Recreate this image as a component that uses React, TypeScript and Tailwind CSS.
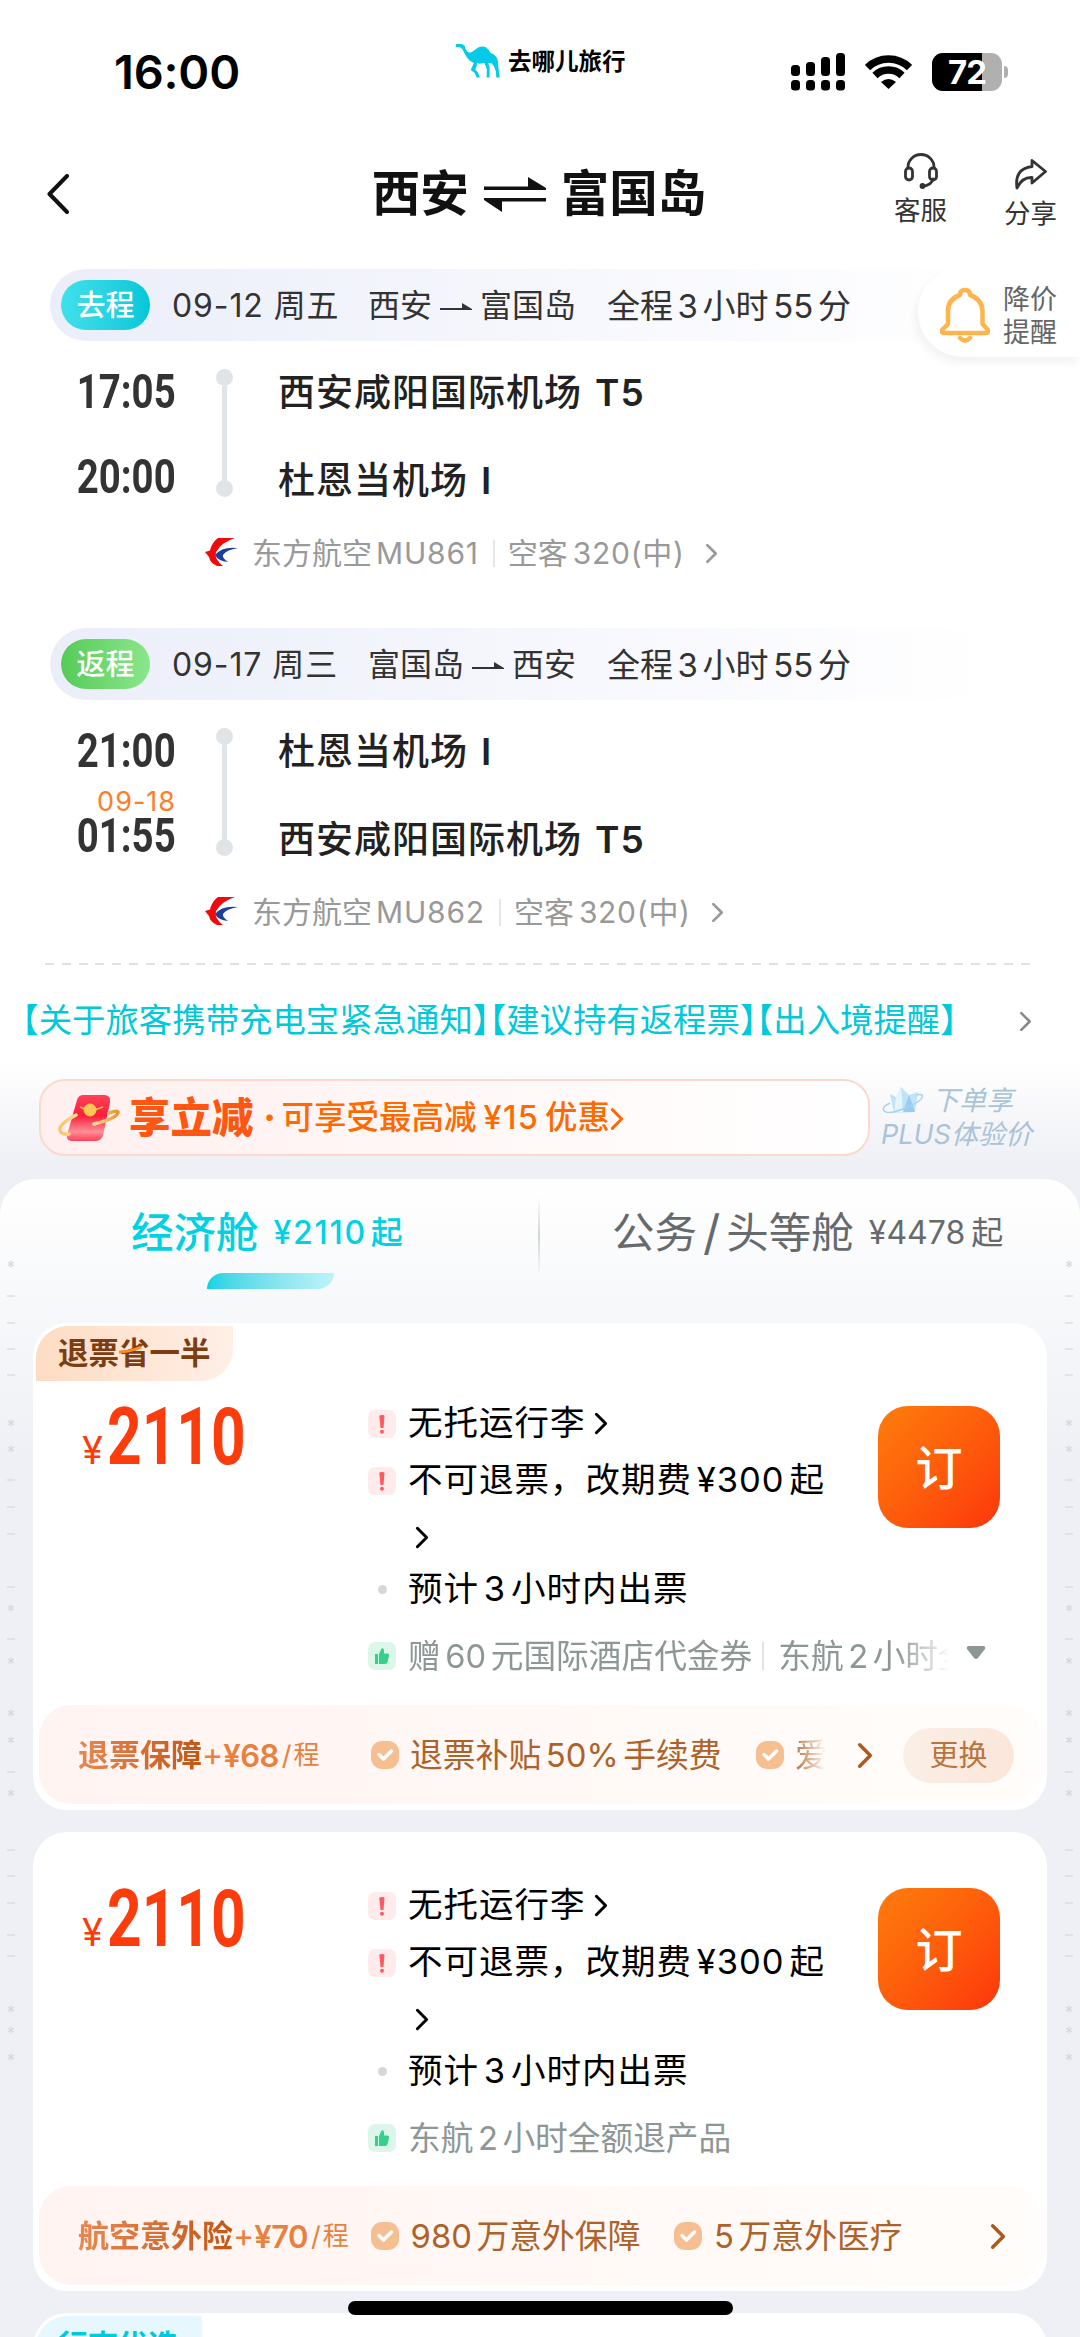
import { Fragment, type ReactNode } from 'react';

interface Airport {
  name: string;
  terminal: string;
}

interface Leg {
  tag: string;
  tagClass: string;
  date: string;
  from: string;
  to: string;
  depart: string;
  arrive: string;
  nextDay?: string;
  airports: Airport[];
  flight: string;
}

const xian = { name: '西安咸阳国际机场', terminal: 'T5' };
const phuQuoc = { name: '杜恩当机场', terminal: 'I' };

const legs: Leg[] = [
  {
    tag: '去程',
    tagClass: 'from-[#3fe0ea] to-[#00c7d9]',
    date: '09-12 周五',
    from: '西安',
    to: '富国岛',
    depart: '17:05',
    arrive: '20:00',
    airports: [xian, phuQuoc],
    flight: 'MU861'
  },
  {
    tag: '返程',
    tagClass: 'from-[#55cb58] to-[#8ae68a]',
    date: '09-17 周三',
    from: '富国岛',
    to: '西安',
    depart: '21:00',
    arrive: '01:55',
    nextDay: '09-18',
    airports: [phuQuoc, xian],
    flight: 'MU862'
  }
];

// Vertical positions of the tiny marks down both edges of the list
const marks: [number, string][] = [
  [85, '*'], [117, '-'], [144, '-'], [170, '-'], [196, '-'], [244, '*'], [270, '*'],
  [301, '-'], [328, '-'], [355, '-'], [408, '-'], [429, '*'], [460, '-'], [482, '*'],
  [534, '*'], [561, '*'], [593, '-'], [614, '*'], [671, '-'], [697, '-'], [724, '-'],
  [756, '-'], [777, '-'], [830, '*'], [851, '*'], [878, '*']
];

/* Adds a little air round digit runs inside Chinese text */
function Mixed({ text }: { text: string }) {
  return (
    <>
      {text.split(/([¥0-9%]+)/).map((part, i) =>
        i % 2 ? (
          <span key={i} className="mx-[0.14em]">{part}</span>
        ) : (
          <Fragment key={i}>{part}</Fragment>
        )
      )}
    </>
  );
}

function Chevron({ className = '', width = 3 }: { className?: string; width?: number }) {
  return (
    <svg viewBox="0 0 12 20" className={`shrink-0 ${className}`} fill="none" stroke="currentColor" strokeWidth={width} strokeLinecap="round" strokeLinejoin="round">
      <path d="M2 2 L10 10 L2 18" />
    </svg>
  );
}

function StatusBar() {
  return (
    <div className="relative flex h-36 items-center justify-between pl-[114px] pr-[72px]">
      <span className="pb-[2px] text-[47px] font-semibold leading-none tracking-[-0.2px] text-black">16:00</span>

      {/* App brand */}
      <div className="absolute left-[455px] top-[43px] flex items-center gap-2">
        <svg viewBox="0 0 134 104" className="h-9 w-[45px]" fill="#06cbe8">
          <path d="M2 2 L13 1 L24 3 L29 7 L31 15 L36 24 Q42 29 50 25 Q60 19 69 12 Q80 6 92 11 Q101 18 106 28 Q118 31 125 43 Q129 52 129 68 L133 101 H123 L122 84 L116 68 L108 58 L99 59 L103 70 L103 101 H94 L95 78 L88 58 L73 60 L66 58 L64 70 L60 78 L68 85 L74 101 H64 L59 88 L47 79 L50 71 L56 58 L44 51 Q34 42 28 29 L22 16 L15 11 L3 10 Z" />
        </svg>
        <span className="pt-px text-[23.5px] font-bold leading-none text-black">去哪儿旅行</span>
      </div>

      <div className="flex items-center">
        <svg viewBox="0 0 54 38" className="mr-5 h-[38px] w-[54px]" fill="#000">
          <rect x="0" y="12" width="9" height="11" rx="3.5" />
          <rect x="15" y="9" width="9" height="14" rx="3.5" />
          <rect x="30" y="4" width="9" height="19" rx="3.5" />
          <rect x="45" y="0" width="9" height="23" rx="3.5" />
          <rect x="0" y="27" width="9" height="10.5" rx="3.5" />
          <rect x="15" y="27" width="9" height="10.5" rx="3.5" />
          <rect x="30" y="27" width="9" height="10.5" rx="3.5" />
          <rect x="45" y="27" width="9" height="10.5" rx="3.5" />
        </svg>
        <svg viewBox="0 0 47 34" className="mr-5 h-[34px] w-[47px]" fill="none" stroke="#000" strokeWidth="7.5">
          <path d="M2.5 12.5 A30 30 0 0 1 44.500 12.500" />
          <path d="M10 20.500 A19.500 19.500 0 0 1 37 20.500" />
          <path d="M23.500 34 L16 27 Q23.500 21 31 27 Z" fill="#000" stroke="none" />
        </svg>
        <div className="relative flex h-[38px] w-[70px] items-center overflow-hidden rounded-[11px] bg-[#b0b0b0]">
          <div className="absolute inset-y-0 left-0 w-[50px] bg-black" />
          <span className="relative w-full text-center text-[33px] font-bold leading-none tracking-[-1px] text-white">72</span>
        </div>
        <div className="ml-0.5 h-3 w-1 rounded-r-full bg-[#b0b0b0]" />
      </div>
    </div>
  );
}

function NavBar() {
  return (
    <div className="relative flex h-[100px] items-center justify-center">
      <svg viewBox="0 0 22 40" className="absolute left-[47px] top-[30px] h-10 w-[22px]" fill="none" stroke="#111" strokeWidth="4" strokeLinecap="round" strokeLinejoin="round">
        <path d="M20 2 L2.500 20 L20 38" />
      </svg>
      <h1 className="flex -translate-x-px items-center text-[48.500px] font-bold leading-none text-[#111]">
        西安
        <svg viewBox="0 0 64 40" className="mx-[14px] h-10 w-16" fill="#111">
          <path d="M1 12.500 H45 V3 L63 14 V16 H1 Z" />
          <path d="M63 27.500 H19 V38 L1 26 V24 H63 Z" />
        </svg>
        富国岛
      </h1>
      <div className="absolute left-[894px] top-[9px] flex flex-col items-center text-[26.500px] leading-none text-[#333]">
        <svg viewBox="0 0 36 36" className="mb-2 h-9 w-9" fill="none" stroke="#333" strokeWidth="2.800">
          <path d="M5 16 V14 A13 12.500 0 0 1 31 14 V16" />
          <rect x="2.500" y="15" width="7" height="12" rx="3.500" />
          <rect x="26.500" y="15" width="7" height="12" rx="3.500" />
          <path d="M30 26 Q29 32 19 33.500" strokeLinecap="round" />
          <circle cx="19.500" cy="33" r="1.500" fill="#333" />
        </svg>
        客服
      </div>
      <div className="absolute left-[1004px] top-[14px] flex flex-col items-center text-[26.500px] leading-none text-[#333]">
        <svg viewBox="0 0 34 32" className="mb-[10px] h-8 w-[34px]" fill="none" stroke="#333" strokeWidth="2.800" strokeLinejoin="round">
          <path d="M18 2.500 L31.500 13.500 L18 25 V19.500 Q8 19 3 30 Q0 11 18 8.500 Z" />
        </svg>
        分享
      </div>
    </div>
  );
}

function LegBlock({ leg }: { leg: Leg }) {
  return (
    <section className="mb-[56px]">
      <div className="ml-[50px] mr-[80px] flex h-[72px] items-center rounded-l-full bg-gradient-to-r from-[#ebeef9] via-[#f6f7fd] to-white pl-[11px] text-[33px] leading-none text-[#333]">
        <span className={`flex h-[50px] w-[89px] items-center justify-center rounded-full bg-gradient-to-r text-[29px] font-medium text-white ${leg.tagClass}`}>
          {leg.tag}
        </span>
        <span className="ml-[22px] w-[196px] whitespace-nowrap pt-[2px] text-[32px] tracking-[0.9px]">{leg.date}</span>
        <span className="flex w-[239px] items-center pt-[2px] text-[32px]">
          {leg.from}
          <svg viewBox="0 0 32 10" className="mx-[8px] h-[10px] w-[32px]" fill="#333">
            <path d="M0 7 H22 V2 L32 8 V9 H0 Z" />
          </svg>
          {leg.to}
        </span>
        <span className="whitespace-nowrap pt-[2px]"><Mixed text="全程3小时55分" /></span>
      </div>

      <div className="mt-7 flex h-[134px]">
        <div className="flex w-[176px] flex-col items-end text-[48px] font-bold leading-none text-[#333]">
          <span className="flex h-[46px] origin-right scale-x-[0.8] items-center font-[Roboto]">{leg.depart}</span>
          <span className="mb-[2px] flex h-[37px] items-end text-[27px] font-normal leading-[19px] tracking-[1px] text-[#ff7d28]">{leg.nextDay}</span>
          <span className="flex h-[46px] origin-right scale-x-[0.8] items-center font-[Roboto]">{leg.arrive}</span>
        </div>
        <div className="ml-10 flex h-32 w-[17px] flex-col items-center">
          <i className="size-[17px] rounded-full bg-[#e0e4e6]" />
          <i className="w-[5px] flex-1 bg-[#e0e4e6]" />
          <i className="size-[17px] rounded-full bg-[#e0e4e6]" />
        </div>
        <div className="ml-[45px] flex flex-col gap-[42px] text-[37px] font-medium leading-none tracking-[1px] text-[#222]">
          {leg.airports.map(({ name, terminal }) => (
            <div key={name} className="flex h-[46px] items-center">
              {name}
              <span className="ml-[13px] font-semibold">{terminal}</span>
            </div>
          ))}
        </div>
      </div>

      <div className="mt-[29px] flex h-10 items-center pl-[205px] pt-[2px] text-[30px] leading-none text-[#999]">
        <svg viewBox="0 0 33 29" className="-mt-[2px] mr-[14px] h-[29px] w-[33px]">
          <path d="M13 0 H30 Q17 4 11 14 Q9 21 18 28 L12 28 Q5 25 4 19 L0 14 L5 12.500 Q7 4 13 0 Z" fill="#f00a0a" />
          <path d="M33 10 Q17 8 10 17 Q13 23 23 24 Q17 20 18 17 Q21 12 33 10 Z" fill="#1b3f9c" />
        </svg>
        东方航空
        <span className="ml-1 tracking-[0.8px]">{leg.flight}</span>
        <i className="ml-[14px] mr-[13px] h-[27px] w-[2px] bg-[#e6e6e6]" />
        空客
        <span className="ml-[5px] tracking-[0.7px]">320(中)</span>
        <Chevron className="ml-[20px] h-[21px] w-[13px]" width={2.6} />
      </div>
    </section>
  );
}

function PriceAlert() {
  return (
    <div className="absolute right-0 top-[267px] flex h-[90px] w-[162px] items-center rounded-l-full bg-white pl-[22px] pt-[5px] shadow-[-3px_6px_8px_rgba(0,0,0,0.05)]">
      <svg viewBox="0 0 50 56" className="h-14 w-[50px]" fill="none" stroke="#ffb44e" strokeWidth="4.500" strokeLinejoin="round" strokeLinecap="round">
        <path d="M20 8 Q20 3 25 3 Q30 3 30 8 Q42 12 42.500 24 V37 L48 43 Q49 46 46 46 H4 Q1 46 2 43 L8 37 V24 Q8 12 20 8 Z" />
        <path d="M20 51 Q25 56 30 51" />
      </svg>
      <div className="ml-[13px] pt-[3px] text-[27px] leading-[33px] text-[#666]">
        降价
        <br />
        提醒
      </div>
    </div>
  );
}

function PromoRow() {
  return (
    <div className="mt-9 flex h-[77px] items-center pl-[39px]">
      <div className="flex h-full w-[831px] items-center rounded-[26px] border-2 border-[#fdd8cb] bg-gradient-to-r from-[#fff0ef] to-white pl-[17px] text-[32.500px] font-medium leading-none text-[#ff6a00]">
        <svg viewBox="0 0 62 50" className="h-[50px] w-[62px]">
          <defs>
            <linearGradient id="packet" x1="0" y1="0" x2="0" y2="1">
              <stop offset="0" stopColor="#ff4257" />
              <stop offset="0.45" stopColor="#f81e3c" />
              <stop offset="0.8" stopColor="#ff8f95" />
              <stop offset="1" stopColor="#ff4058" />
            </linearGradient>
            <linearGradient id="ring" x1="0" y1="0" x2="1" y2="0">
              <stop offset="0" stopColor="#f8c468" />
              <stop offset="0.5" stopColor="#ffe9b0" />
              <stop offset="1" stopColor="#e8952e" />
            </linearGradient>
          </defs>
          <path d="M24 2 H47 Q53 3 52 9 L45 43 Q43 48 37 48 H13 Q8 47 9 42 L19 7 Q20 3 24 2 Z" fill="url(#packet)" />
          <path d="M18 22 Q1 31 2 37 Q3 42 11 41 M36 31 Q60 25 60 19 Q59 17 51 20" fill="none" stroke="url(#ring)" strokeWidth="3.500" strokeLinecap="round" />
          <path d="M22 14 Q32 20 45 14" fill="none" stroke="#ffb15c" strokeWidth="1.500" />
          <circle cx="32" cy="17" r="6.500" fill="#ffc654" />
        </svg>
        <div className="flex items-center pt-[2px]">
          <span className="ml-[9px] text-[41.500px] font-black text-[#ff5612]">享立减</span>
          <span className="mx-[10px] w-2 text-center font-black">·</span>
          可享受最高减
          <span className="ml-[7px] mr-[6px] tracking-[1.300px]">¥15</span>
          优惠
          <Chevron className="h-[26px] w-[14px]" width={2.600} />
        </div>
      </div>
      <div className="ml-[11px] text-[27px] italic leading-[34px] text-[#a9c3d8]">
        <div className="flex items-center">
          <svg viewBox="0 0 44 30" className="mr-[7px] h-[30px] w-11">
            <path d="M9 8 L15 11 L20 1 L28 9 L37 6 L34 26 L13 27 Z" fill="#bfe3f8" />
            <path d="M20 1 L22 26 L13 27 L15 11 Z" fill="#e2f4fd" />
            <path d="M28 9 L22 26 L34 26 Z" fill="#98cdf0" />
            <path d="M9 17 Q0 21 3 25 Q8 29 24 22 Q44 14 41 9 Q39 8 36 9" fill="none" stroke="#a8d2ee" strokeWidth="1.500" />
          </svg>
          下单享
        </div>
        <div className="whitespace-nowrap">PLUS体验价</div>
      </div>
    </div>
  );
}

function BulletRow({ kind, className = '', children }: { kind: 'warn' | 'dot' | 'gift'; className?: string; children: ReactNode }) {
  return (
    <div className={`flex items-center ${className}`}>
      <span className="mr-[12px] flex w-7 shrink-0 justify-center">
        {kind === 'warn' && (
          <svg viewBox="0 0 28 28" className="size-7">
            <rect width="28" height="28" rx="7" fill="#ffebec" />
            <path d="M11.300 6 Q11.300 5 14 5 Q16.500 5 16.500 6 L15.500 18 H12.500 Z" fill="#fb5b62" />
            <circle cx="14" cy="21.700" r="2" fill="#fb5b62" />
          </svg>
        )}
        {kind === 'dot' && <i className="size-[9px] rounded-full bg-[#d5d8d8]" />}
        {kind === 'gift' && (
          <svg viewBox="0 0 28 28" className="size-7">
            <rect width="28" height="28" rx="7" fill="#dcf7ea" />
            <path d="M7 12 H10 V22 H7 Z M11 12 L13.500 6.500 Q15.500 5.500 16 8 V11.500 H20 Q21.500 12 21 14 L19.500 20 Q19 22 17 22 H11 Z" fill="#36cf8b" />
          </svg>
        )}
      </span>
      {children}
    </div>
  );
}

function Check() {
  return (
    <svg viewBox="0 0 28 28" className="size-7 shrink-0">
      <rect width="28" height="28" rx="11" fill="#f6bf92" />
      <path d="M8 13.500 L12.500 18 L20.500 10" fill="none" stroke="#fff" strokeWidth="3.500" strokeLinecap="round" strokeLinejoin="round" />
    </svg>
  );
}

function FareCard({ badge, gifts, insurance }: { badge?: boolean; gifts: ReactNode; insurance: ReactNode }) {
  return (
    <article className={`flex flex-col rounded-[34px] bg-white ${badge ? 'h-[487px]' : 'h-[459px]'}`}>
      {badge && (
        <div className="ml-[3px] mt-[3px] flex h-[55px] w-[197px] items-center rounded-br-[32px] rounded-tl-[32px] bg-gradient-to-r from-[#fedcc3] to-[#ffefe6] pl-[22px] text-[30.500px] font-bold leading-none text-[#7a3d14]">
          退票
          <span className="relative">
            省
            <svg viewBox="0 0 24 9" className="absolute -left-px top-[7px] h-[9px] w-6">
              <path d="M1 7 Q12 7 23 2" fill="none" stroke="#ff8a1c" strokeWidth="3" />
            </svg>
          </span>
          一半
        </div>
      )}
      <div className={`flex ${badge ? 'pt-[17px]' : 'pt-[48px]'}`}>
        <div className="flex w-[335px] items-baseline pl-[49px] leading-none text-[#fc3c0c]">
          <span className="w-[25px] text-[38px]">¥</span>
          <span className="inline-block origin-left scale-x-[0.765] font-[Roboto] text-[79px] font-bold">2110</span>
        </div>
        <div className="-mt-[3px] w-[510px] text-[34.500px] leading-none tracking-[1px] text-black">
          <BulletRow kind="warn" className="h-[57px]">
            无托运行李
            <Chevron className="ml-[8px] h-[23px] w-[14px]" width={2.600} />
          </BulletRow>
          <BulletRow kind="warn" className="h-[57px]">
            <span className="whitespace-nowrap"><Mixed text="不可退票，改期费¥300起" /></span>
          </BulletRow>
          <div className="flex h-[56px] items-center pl-[47px]">
            <Chevron className="h-[23px] w-[14px]" width={2.600} />
          </div>
          <BulletRow kind="dot" className="h-[48px]">
            <span><Mixed text="预计3小时内出票" /></span>
          </BulletRow>
        </div>
        <button className="mt-2 h-[122px] w-[122px] rounded-[30px] bg-gradient-to-br from-[#fd7c0c] to-[#fd330b] text-[47px] font-medium leading-none text-white">
          订
        </button>
      </div>
      <BulletRow kind="gift" className="mt-[23px] h-[40px] pl-[335px] pr-[61px] text-[32.700px] leading-none text-[#8e9796]">
        {gifts}
      </BulletRow>
      <div className="mx-[6px] mb-[6px] mt-auto flex h-[99px] items-center rounded-[32px] bg-gradient-to-r from-[#fff4f1] to-[#fffdfb] pl-[40px] pt-px text-[32.800px] leading-none text-[#ae622a]">
        {insurance}
      </div>
    </article>
  );
}

function InsuranceName({ name, price }: { name: string; price: string }) {
  return (
    <div className="flex w-[292px] shrink-0 items-center whitespace-nowrap text-[#e8803f]">
      <span className="-ml-px bg-gradient-to-r from-[#ea8750] to-[#c25712] bg-clip-text text-[31px] font-bold leading-[40px] text-transparent">{name}</span>
      <span className="text-[32px]">+</span>
      <span className="text-[31px] font-semibold tracking-[-0.5px]">{price}</span>
      <span className="ml-[3px] text-[27px]">/</span>
      <span className="ml-[2px] text-[26px]">程</span>
    </div>
  );
}

function Marks({ side }: { side: string }) {
  return (
    <div className={`absolute top-0 w-2 ${side}`}>
      {marks.map(([y, kind]) => (
        <svg key={y} viewBox="0 0 8 8" className="absolute left-0 size-2" style={{ top: y - 4 }} stroke="#d6d7d9" strokeWidth="1.200">
          <path d={kind === '-' ? 'M0 4 H8' : 'M4 0.500 V7.500 M1 2 L7 6 M7 2 L1 6'} />
        </svg>
      ))}
    </div>
  );
}

export default function App() {
  return (
    <div className="relative h-[2337px] w-[1080px] overflow-hidden bg-[linear-gradient(#fff_0,#fff_1060px,#eff0f5_1165px)] font-['Inter','Noto_Sans_CJK_SC',sans-serif]">
      <StatusBar />
      <NavBar />
      <main className="pt-[25px]">
        {legs.map((leg) => (
          <LegBlock key={leg.flight} leg={leg} />
        ))}
        <div className="-mt-[24px] ml-[45px] h-[2px] w-[985px] bg-[repeating-linear-gradient(90deg,#dfe2e2_0,#dfe2e2_9px,transparent_9px,transparent_16.830px)]" />

        {/* Travel notices */}
        <div className="mt-[34px] flex h-11 items-center justify-between pl-[22px] pr-[48px] text-[33.400px] leading-none text-[#00c9d9]">
          <span className="whitespace-nowrap [font-feature-settings:'halt'] [text-spacing-trim:space-all]">
            【关于旅客携带充电宝紧急通知】【建议持有返程票】【出入境提醒】
          </span>
          <Chevron className="h-[21px] w-[13px] text-[#888]" width={2.400} />
        </div>

        <PromoRow />

        {/* Cabin tabs and fares */}
        <div className="relative mt-[23px] h-[1158px] rounded-t-[36px] bg-[linear-gradient(#fff_0,#f7f8fa_130px,#eff0f5_280px)]">
          <Marks side="left-[7px]" />
          <Marks side="right-[7px]" />
          <div className="flex h-36 pt-[17px]">
            <div className="flex w-[538px] flex-col pl-[131px] text-[#00d2e4]">
              <div className="flex h-[72px] items-center pt-[2px] text-[42.500px] font-medium leading-none">
                经济舱
                <span className="ml-[15px] text-[32px] tracking-[1.700px]">¥2110</span>
                <span className="ml-[4px] text-[32px]">起</span>
              </div>
              <div className="ml-[76px] mt-[5px] h-4 w-[127px] rounded-br-[16px] rounded-tl-[16px] bg-gradient-to-r from-[#00d2e4] to-[#bdf4f8]" />
            </div>
            <div className="h-20 w-[2px] bg-gradient-to-b from-transparent via-[#d2d4d6] to-transparent" />
            <div className="flex h-[72px] items-center pl-[72px] pt-[2px] text-[42.500px] leading-none text-[#666a6c]">
              公务
              <span className="mx-[6px] text-[48px]">/</span>
              头等舱
              <span className="ml-[15px] text-[32px]">¥4478</span>
              <span className="ml-[6px] text-[32px]">起</span>
            </div>
          </div>

          <div className="flex flex-col gap-[22px] px-[33px]">
            <FareCard
              badge
              gifts={
                <>
                  <div className="flex w-[543px] items-center overflow-hidden whitespace-nowrap [mask-image:linear-gradient(90deg,#000_90%,transparent)]">
                    <span className="leading-[40px]"><Mixed text="赠60元国际酒店代金券" /></span>
                    <i className="ml-[10px] mr-[14px] h-7 w-[2px] shrink-0 bg-[#e2e4e4]" />
                    <span className="leading-[40px]"><Mixed text="东航2小时全额退产品" /></span>
                  </div>
                  <svg viewBox="0 0 20 13" className="-mt-2 ml-[16px] h-[13px] w-5 shrink-0" fill="#8e9796">
                    <path d="M3 0 H17 Q20 0 19 3 L12 12 Q10 14 8 12 L1 3 Q0 0 3 0 Z" />
                  </svg>
                </>
              }
              insurance={
                <>
                  <InsuranceName name="退票保障" price="¥68" />
                  <Check />
                  <span className="ml-[11px] whitespace-nowrap"><Mixed text="退票补贴50%手续费" /></span>
                  <span className="ml-auto mr-[31px] flex w-[70px] items-center [mask-image:linear-gradient(90deg,#000_50%,transparent)]">
                    <Check />
                    <span className="ml-[11px] leading-[40px]">爱</span>
                  </span>
                  <Chevron className="mr-[30px] h-[27px] w-[16px] text-[#b0571b]" width={2.600} />
                  <button className="mr-[27px] h-[55px] w-[111px] shrink-0 rounded-full bg-gradient-to-r from-[#faefe6] to-[#fbe6da] text-[29px] leading-none text-[#b87440]">
                    更换
                  </button>
                </>
              }
            />

            <FareCard
              gifts={<span><Mixed text="东航2小时全额退产品" /></span>}
              insurance={
                <>
                  <InsuranceName name="航空意外险" price="¥70" />
                  <Check />
                  <span className="ml-[7px] mr-[34px] whitespace-nowrap"><Mixed text="980万意外保障" /></span>
                  <Check />
                  <span className="ml-[7px] whitespace-nowrap"><Mixed text="5万意外医疗" /></span>
                  <Chevron className="ml-auto mr-[35px] h-[27px] w-[16px] text-[#b0571b]" width={2.600} />
                </>
              }
            />

            <article className="h-[60px] rounded-t-[34px] bg-white p-[3px]">
              <div className="h-[57px] w-[166px] rounded-tl-[32px] bg-[#e6f8fe] pl-[22px] pt-[14px] text-[30px] font-bold leading-none text-[#00c9de]">
                行李优选
              </div>
            </article>
          </div>
        </div>
      </main>

      <PriceAlert />
      {/* Home indicator */}
      <div className="absolute bottom-[22px] left-[348px] h-[14px] w-[385px] rounded-full bg-black" />
    </div>
  );
}
